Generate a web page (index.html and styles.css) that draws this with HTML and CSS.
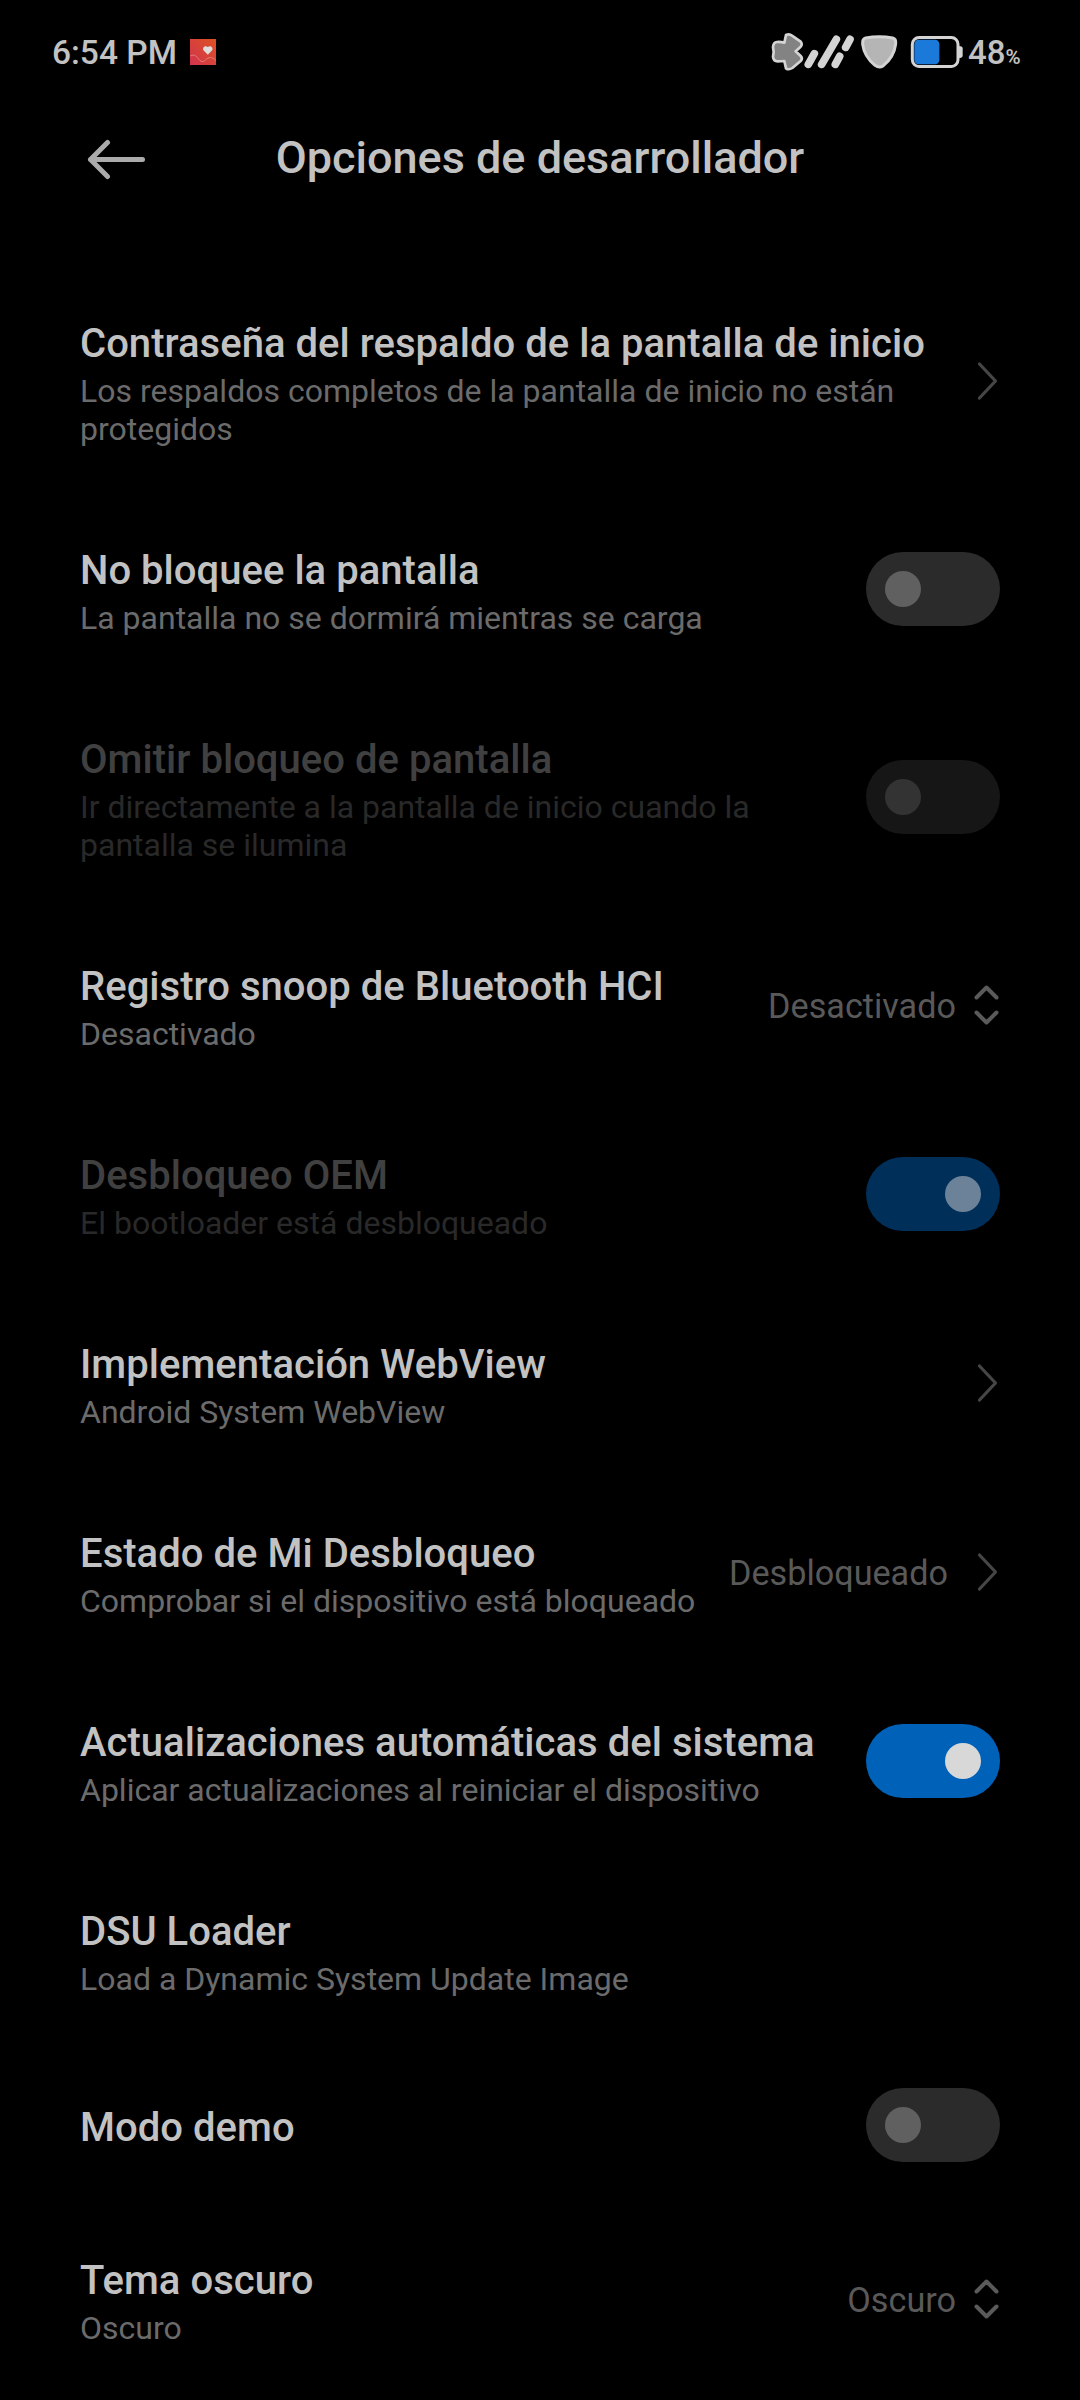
FILE: index.html
```html
<!DOCTYPE html>
<html lang="es">
<head>
<meta charset="utf-8">
<title>Opciones de desarrollador</title>
<link rel="stylesheet" href="styles.css">
</head>
<body>
<svg class="symbols" aria-hidden="true">
  <symbol id="chevron" viewBox="0 0 26 42"><path d="M4.5 4 L20.5 21 L4.5 38" fill="none" stroke="#464646" stroke-width="3.2" stroke-linecap="round" stroke-linejoin="round"/></symbol>
  <symbol id="updown" viewBox="0 0 28 44"><path d="M3.500 14.5 L13.500 4.5 L23.500 14.5 M3.500 29.5 L13.500 39.5 L23.500 29.5" fill="none" stroke="#5a5a5a" stroke-width="4" stroke-linecap="round" stroke-linejoin="round"/></symbol>
</svg>
<div class="screen">
  <header class="status">
    <span class="clock">6:54 PM</span>
    <svg class="app" viewBox="0 0 26 26">
      <defs><linearGradient id="red" x1="0" y1="1" x2="1" y2="0"><stop offset="0" stop-color="#d23350"/><stop offset="1" stop-color="#dc5222"/></linearGradient></defs>
      <rect width="26" height="26" fill="url(#red)"/>
      <path d="M17.8 15.8 L13.7 11.6 C11.8 9.2 14.6 5.6 17.8 8 C21 5.6 23.8 9.2 21.9 11.6 Z" fill="#dedede"/>
      <path d="M0 17 C5 14.500 7 18 9 20.500 C12 24 14 22.500 16.500 20 C20 17.500 23 18.500 26 21.500" fill="none" stroke="#e58d83" stroke-width=".8"/>
    </svg>
    <div class="indicators">
      <svg class="bluetooth" viewBox="90 66 102 120"><path d="M138 75 Q148 70 156 77 L182 95 Q188 103 182 110 L167 124 L182 138 Q189 146 182 153 L157 174 Q146 181 138 175 L133 153 Q120 154 113 154 Q100 154 99 140 L101 126 L99 111 Q100 97 111 96 Q121 95 133 98 Z" fill="#838383" stroke="#d4d4d4" stroke-width="8" stroke-linejoin="round"/></svg>
      <svg class="signal" viewBox="192 66 153 120"><path d="M205 163 L223 131 M245 163 L289 88 M286 163 L299 139 M317 112 L330 88" fill="none" stroke="#d4d4d4" stroke-width="23" stroke-linecap="round"/></svg>
      <svg class="wifi" viewBox="345 66 132 120"><path d="M377 84 Q418 77 458 84 Q469 87 467 102 Q462 141 430 167 Q418 175 405 166 Q373 140 368 103 Q366 87 377 84 Z" fill="#b5b5b5" stroke="#d4d4d4" stroke-width="9" stroke-linejoin="round"/></svg>
      <svg class="battery" viewBox="477 66 195 120"><path d="M655 108 Q668 108 668 115 V137 Q668 144 655 144 Z" fill="#d4d4d4"/><rect x="517" y="82.500" width="137" height="87" rx="20" fill="#000" stroke="#d4d4d4" stroke-width="9"/><rect x="523" y="89" width="75" height="74" rx="13" fill="#1b79d9"/></svg>
      <span class="charge">48</span><span class="percent">%</span>
    </div>
  </header>
  <nav class="bar">
    <svg class="back" viewBox="0 0 60 42"><path d="M56.500 20.500 H4.500 M21.500 3.500 L4.500 20.500 L21.500 37.500" fill="none" stroke="#ababab" stroke-width="5" stroke-linecap="round" stroke-linejoin="round"/></svg>
    <h1>Opciones de desarrollador</h1>
  </nav>
  <main class="list">
    <section class="row tall">
      <div class="text"><h2>Contraseña del respaldo de la pantalla de inicio</h2><p>Los respaldos completos de la pantalla de inicio no están<br>protegidos</p></div>
      <svg class="chevron"><use href="#chevron"/></svg>
    </section>
    <section class="row">
      <div class="text"><h2>No bloquee la pantalla</h2><p>La pantalla no se dormirá mientras se carga</p></div>
      <div class="switch"></div>
    </section>
    <section class="row tall disabled">
      <div class="text"><h2>Omitir bloqueo de pantalla</h2><p>Ir directamente a la pantalla de inicio cuando la<br>pantalla se ilumina</p></div>
      <div class="switch"></div>
    </section>
    <section class="row">
      <div class="text"><h2>Registro snoop de Bluetooth HCI</h2><p>Desactivado</p></div>
      <span class="value">Desactivado</span><svg class="updown"><use href="#updown"/></svg>
    </section>
    <section class="row disabled">
      <div class="text"><h2>Desbloqueo OEM</h2><p>El bootloader está desbloqueado</p></div>
      <div class="switch on"></div>
    </section>
    <section class="row">
      <div class="text"><h2>Implementación WebView</h2><p>Android System WebView</p></div>
      <svg class="chevron"><use href="#chevron"/></svg>
    </section>
    <section class="row">
      <div class="text"><h2>Estado de Mi Desbloqueo</h2><p>Comprobar si el dispositivo está bloqueado</p></div>
      <span class="value">Desbloqueado</span><svg class="chevron"><use href="#chevron"/></svg>
    </section>
    <section class="row">
      <div class="text"><h2>Actualizaciones automáticas del sistema</h2><p>Aplicar actualizaciones al reiniciar el dispositivo</p></div>
      <div class="switch on"></div>
    </section>
    <section class="row">
      <div class="text"><h2>DSU Loader</h2><p>Load a Dynamic System Update Image</p></div>
    </section>
    <section class="row short">
      <div class="text"><h2>Modo demo</h2></div>
      <div class="switch"></div>
    </section>
    <section class="row">
      <div class="text"><h2>Tema oscuro</h2><p>Oscuro</p></div>
      <span class="value">Oscuro</span><svg class="updown"><use href="#updown"/></svg>
    </section>
  </main>
</div>
</body>
</html>
```
FILE: styles.css
```css
* { box-sizing: border-box; margin: 0; padding: 0; }
body { background: #000; font-family: Roboto, sans-serif; color: #c2c2c2; }
svg { display: block; flex: none; }
.symbols { position: absolute; width: 0; height: 0; }
.screen { width: 1080px; height: 2400px; overflow: hidden; background: #000; }

.status { display: flex; align-items: center; height: 104px; padding-left: 52px; }
.clock { width: 138px; font-size: 33.500px; font-weight: 500; padding-top: 1px; white-space: nowrap; }
.app { width: 26px; height: 26px; }
.indicators { display: flex; align-items: center; margin-left: 554px; }
.bluetooth { width: 34px; height: 40px; }
.signal { width: 51px; height: 40px; }
.wifi { width: 44px; height: 40px; }
.battery { width: 65px; height: 40px; }
.charge { margin-left: 4px; font-size: 33px; font-weight: 500; }
.percent { font-size: 20.500px; font-weight: 600; padding-top: 10px; }

.bar { display: grid; grid-template-columns: 150px 1fr 150px; align-items: center; height: 163px; padding-bottom: 51px; }
.back { width: 60px; height: 42px; margin: 0 0 0 86px; }
.bar h1 { font-size: 45px; font-weight: 500; text-align: center; padding-bottom: 6px; white-space: nowrap; }

.row { display: flex; align-items: center; height: 189px; padding: 0 80px; }
.row.tall { height: 227px; }
.row.short { height: 160px; padding-top: 2px; }
.text { flex: 1; padding-top: 7px; white-space: nowrap; }
.short .text { padding-top: 5px; }
.text h2 { font-size: 40px; line-height: 47px; font-weight: 500; letter-spacing: .03px; }
.text p { margin-top: 5px; font-size: 32px; line-height: 38px; color: #6b6b6b; }
.value { padding-top: 3px; font-size: 34.200px; color: #595959; }
.chevron { width: 26px; height: 42px; margin-left: 27px; margin-right: -1px; }
.updown { width: 28px; height: 44px; margin-left: 17px; margin-right: -1px; }

.switch { flex: none; display: flex; align-items: center; width: 134px; height: 74px; padding: 0 19px; border-radius: 37px; background: #2b2b2b; }
.switch::before { content: ""; width: 36px; height: 36px; border-radius: 50%; background: #606060; }
.switch.on { justify-content: flex-end; background: #0061b8; }
.switch.on::before { background: #d8d8d8; }
.disabled h2 { color: #404040; }
.disabled p { color: #292929; }
.disabled .switch { background: #161616; }
.disabled .switch::before { background: #333; }
.disabled .switch.on { background: #002f5a; }
.disabled .switch.on::before { background: #6b8299; }
```
